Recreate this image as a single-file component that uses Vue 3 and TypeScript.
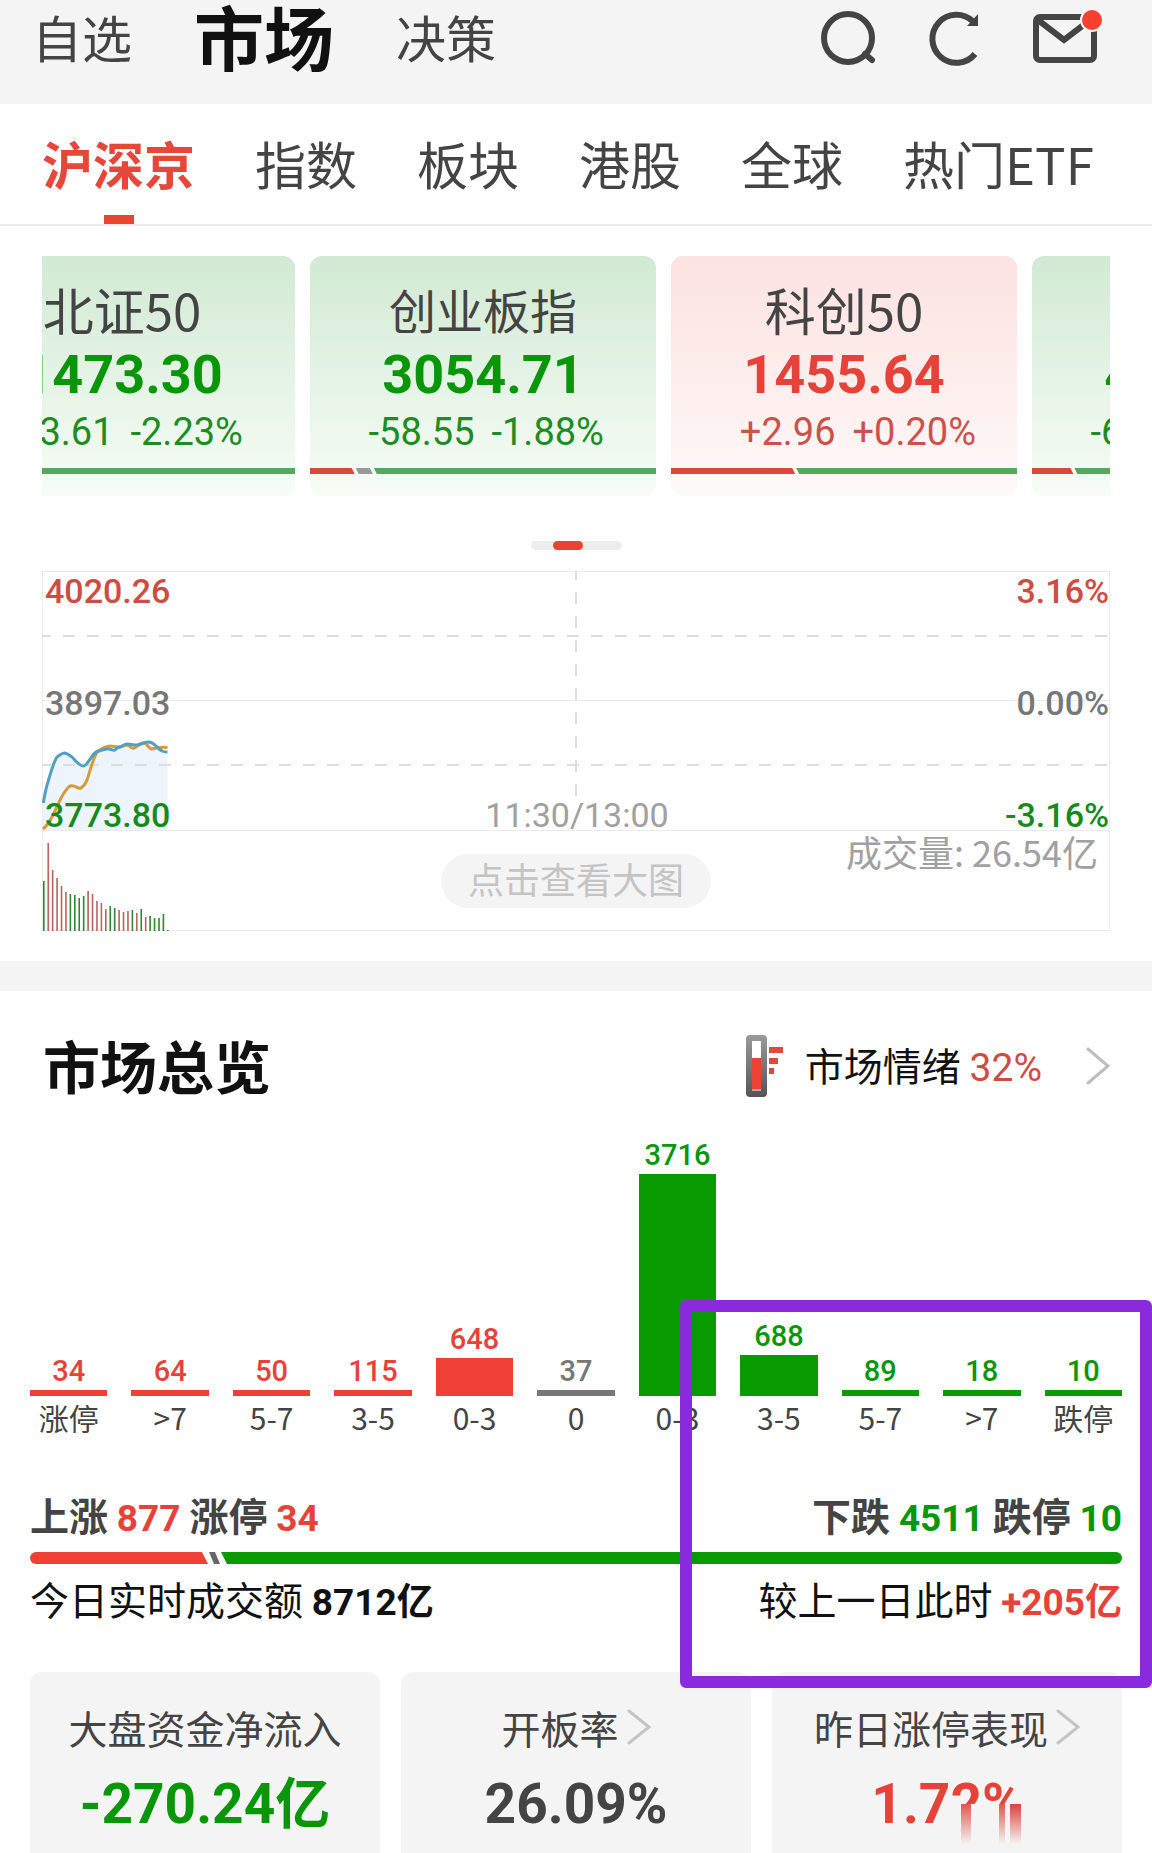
<script setup lang="ts">
type Tone = 'up' | 'down' | 'flat'

interface Segment { tone: Tone; share: number }
interface IndexCard {
  name: string
  long?: boolean
  price: string
  change: string
  percent: string
  tone: Tone
  segments: Segment[]
}
interface Bucket { count: number; label: string; tone: Tone; height: number }

const sections = ['自选', '市场', '决策']
const tabs = ['沪深京', '指数', '板块', '港股', '全球', '热门ETF']

const cards: IndexCard[] = [
  { name: '北证50', price: '1473.30', change: '-33.61', percent: '-2.23%', tone: 'down',
    segments: [{ tone: 'up', share: 10 }, { tone: 'down', share: 90 }] },
  { name: '创业板指', long: true, price: '3054.71', change: '-58.55', percent: '-1.88%', tone: 'down',
    segments: [{ tone: 'up', share: 13 }, { tone: 'flat', share: 5 }, { tone: 'down', share: 82 }] },
  { name: '科创50', price: '1455.64', change: '+2.96', percent: '+0.20%', tone: 'up',
    segments: [{ tone: 'up', share: 36 }, { tone: 'down', share: 64 }] },
  { name: '沪深300', long: true, price: '4650.12', change: '-65.30', percent: '-1.38%', tone: 'down',
    segments: [{ tone: 'up', share: 12 }, { tone: 'down', share: 88 }] },
]

const scale = [
  { value: '4020.26', percent: '3.16%', tone: 'up' },
  { value: '3897.03', percent: '0.00%', tone: 'flat' },
  { value: '3773.80', percent: '-3.16%', tone: 'down' },
]

const volumeHeights = [50, 88, 61, 53, 45, 39, 37, 36, 33, 35, 40, 37, 30, 28, 22, 25, 23, 21, 19, 20, 21, 18, 22, 14, 15, 13, 13, 17, 1]
const volumeTones = 'grrrrrggggrrrrrggrrrgrgrggggg'
const volumes = volumeHeights.map((h, i) => ({
  x: 1 + i * 4.43,
  h,
  fill: volumeTones[i] === 'g' ? '#2f8536' : '#b8645f',
}))

const buckets: Bucket[] = [
  { count: 34, label: '涨停', tone: 'up', height: 6 },
  { count: 64, label: '>7', tone: 'up', height: 6 },
  { count: 50, label: '5-7', tone: 'up', height: 6 },
  { count: 115, label: '3-5', tone: 'up', height: 6 },
  { count: 648, label: '0-3', tone: 'up', height: 38 },
  { count: 37, label: '0', tone: 'flat', height: 6 },
  { count: 3716, label: '0-3', tone: 'down', height: 222 },
  { count: 688, label: '3-5', tone: 'down', height: 41 },
  { count: 89, label: '5-7', tone: 'down', height: 6 },
  { count: 18, label: '>7', tone: 'down', height: 6 },
  { count: 10, label: '跌停', tone: 'down', height: 6 },
]
</script>

<template>
  <div class="page">
    <header class="top">
      <nav class="sections">
        <a v-for="s in sections" :key="s" href="#" :class="{ current: s === '市场' }">{{ s }}</a>
      </nav>
      <div class="tools">
        <button type="button" aria-label="搜索">
          <svg width="60" height="76" viewBox="0 0 60 76" fill="none" stroke="#444" stroke-width="6" stroke-linecap="round">
            <circle cx="30" cy="38" r="24" />
            <path d="M47 54 L54 60" />
          </svg>
        </button>
        <button type="button" aria-label="刷新">
          <svg width="60" height="76" viewBox="0 0 60 76" fill="none" stroke="#444" stroke-width="6">
            <path d="M49 21.500 A24 24 0 1 0 51 54" />
            <path d="M54 14 V26 H43 Z" fill="#444" stroke="none" />
          </svg>
        </button>
        <button type="button" aria-label="消息">
          <svg width="76" height="76" viewBox="0 0 76 76" fill="none" stroke="#444" stroke-width="6">
            <rect x="6" y="17" width="58" height="43" rx="4" />
            <path d="M8 20 L34 40 L60 20" />
            <circle cx="62" cy="20" r="12" fill="#f4f4f4" stroke="none" />
            <circle cx="62" cy="20" r="10" fill="#f83f31" stroke="none" />
          </svg>
        </button>
      </div>
    </header>

    <nav class="tabs">
      <a v-for="t in tabs" :key="t" href="#" :class="{ current: t === '沪深京' }">{{ t }}</a>
    </nav>

    <section class="carousel">
      <div class="track">
        <article v-for="c in cards" :key="c.name" class="index-card" :class="c.tone">
          <h2 :class="{ long: c.long }">{{ c.name }}</h2>
          <p class="price">{{ c.price }}</p>
          <p class="change"><span>{{ c.change }}</span><span>{{ c.percent }}</span></p>
          <div class="ratio">
            <i v-for="(s, i) in c.segments" :key="i" :class="s.tone" :style="{ width: s.share + '%' }"></i>
          </div>
        </article>
      </div>
    </section>
    <div class="pager"><i></i></div>

    <section class="chart">
      <svg class="plot" viewBox="0 0 1068 360" preserveAspectRatio="none" fill="none">
        <path d="M1.300 232 L5.800 211 L15 186 L23 182 L30 186 L37 193 L42 195 L46 192 L54 181 L65 178 L73 180 L77 176 L85 173 L95 174 L106 171 L112 173 L120 180 L125.500 181 V259 H1 Z" fill="#edf4fc" />
        <path d="M.5 .5 H1067.500 V359.500 H.5 Z M0 129.500 H1068 M0 259.500 H1068" stroke="#ebebeb" />
        <path d="M0 65 H1068 M0 194 H1068" stroke="#dedede" stroke-width="2" stroke-dasharray="12 12" stroke-dashoffset="3" />
        <path d="M534 0 V226" stroke="#dedede" stroke-width="2" stroke-dasharray="12 12" stroke-dashoffset="3" />
        <path d="M1 258 C6 254 8 250 11 244 C15 236 18 228 22 222 C26 216 28 214 31 215 C34 215 36 218 39 217 C42 215 43 214 45 209 C48 201 50 190 55 181 C59 178 64 175 68 175 C71 175 73 176 76 176 C80 176 82 174 86 174 C88 175 89 178 92 177 C96 175 99 172 103 172 C105 173 107 178 110 178 C113 177 118 176 125.500 176.500" stroke="#d69a3c" stroke-width="3" />
        <path d="M1.300 232 C3 222 4 217 6 211 C9 201 11 192 15 186 C18 184 20 182 23 182 C26 183 27 184 30 186 C32 188 35 192 37 193 C39 195 40 195 42 195 C44 194 45 193 46 191 C49 187 51 183 54 181 C58 180 62 178 65 178 C68 177 70 180 73 179 C75 178 75 176 78 176 C81 175 82 173 85 173 C88 173 91 174 95 174 C99 173 102 171 106 171 C109 171 111 172 113 174 C115 176 117 179 120 180 C122 181 124 181 125.500 181" stroke="#4f9fc9" stroke-width="3" />
        <rect v-for="v in volumes" :key="v.x" :x="v.x" :y="360 - v.h" width="1.600" :height="v.h" :fill="v.fill" />
      </svg>
      <div class="prices">
        <div v-for="s in scale" :key="s.value" class="price-row">
          <span :class="s.tone">{{ s.value }}</span>
          <time v-if="s.tone === 'down'">11:30/13:00</time>
          <span class="right" :class="s.tone">{{ s.percent }}</span>
        </div>
      </div>
      <div class="volume">
        <button type="button">点击查看大图</button>
        <p>成交量: 26.54亿</p>
      </div>
    </section>

    <section class="overview">
      <header class="overview-head">
        <h1>市场总览</h1>
        <a href="#" class="mood">
          <svg width="38" height="62" viewBox="0 0 38 62">
            <defs>
              <linearGradient id="tube" x1="0" y1="0" x2="0" y2="1">
                <stop offset="0" stop-color="#9a9a9a" />
                <stop offset="1" stop-color="#555" />
              </linearGradient>
            </defs>
            <rect width="21" height="62" rx="4" fill="url(#tube)" />
            <rect x="6" y="6" width="9" height="50" fill="#fff" />
            <rect x="6" y="23" width="9" height="31" fill="#ee4034" />
            <rect x="6" y="54" width="9" height="2" fill="#aaa" />
            <path d="M23 12 h14 v6 h-14 z M23 23 h9 v6 h-9 z M23 33 h5 v6 h-5 z" fill="#e0483c" />
          </svg>
          <span class="mood-text">市场情绪 <b>32%</b></span>
          <svg width="24" height="38" viewBox="0 0 24 38" fill="none" stroke="#bdbdbd" stroke-width="3" stroke-linecap="round">
            <path d="M2 2 L22 19 L2 36" />
          </svg>
        </a>
      </header>

      <div class="bars">
        <div v-for="(b, i) in buckets" :key="i" class="bucket" :class="b.tone">
          <span class="count">{{ b.count }}</span>
          <i :style="{ height: b.height + 'px' }"></i>
          <span class="label">{{ b.label }}</span>
        </div>
      </div>

      <div class="line strong">
        <p>上涨 <b class="up">877</b> 涨停 <b class="up">34</b></p>
        <p>下跌 <b class="down">4511</b> 跌停 <b class="down">10</b></p>
      </div>
      <div class="breadth"><i class="rise"></i><i class="even"></i><i class="fall"></i></div>
      <div class="line">
        <p>今日实时成交额 <b>8712亿</b></p>
        <p>较上一日此时 <b class="up">+205亿</b></p>
      </div>

      <div class="stats">
        <article>
          <h3>大盘资金净流入</h3>
          <p class="down">-270.24亿</p>
        </article>
        <article>
          <h3>开板率
            <svg width="24" height="38" viewBox="0 0 24 38" fill="none" stroke="#c4c4c4" stroke-width="3" stroke-linecap="round"><path d="M2 3 L22 19 L2 35" /></svg>
          </h3>
          <p>26.09%</p>
        </article>
        <article>
          <h3>昨日涨停表现
            <svg width="24" height="38" viewBox="0 0 24 38" fill="none" stroke="#c4c4c4" stroke-width="3" stroke-linecap="round"><path d="M2 3 L22 19 L2 35" /></svg>
          </h3>
          <p class="up"><span class="smeared">1.72%<i></i></span></p>
        </article>
      </div>

      <div class="marker"></div>
    </section>
  </div>
</template>

<style>
body {
  background: #fff;
}
</style>

<style scoped>
.page {
  overflow: hidden;
  background: #fff;
  color: #444;
  font-family: "Noto Sans CJK SC", sans-serif;
}
h1, h2, h3, p {
  margin: 0;
  font-weight: 400;
}
a {
  color: inherit;
  text-decoration: none;
}
button {
  border: 0;
  padding: 0;
  background: none;
  font: inherit;
}
svg {
  display: block;
}
i {
  display: block;
}
.top {
  display: flex;
  justify-content: space-between;
  padding: 0 46px 28px 32px;
  background: #f4f4f4;
}
.sections {
  display: flex;
  gap: 62px;
  font-size: 50px;
  line-height: 72px;
}
.sections .current {
  color: #111;
  font-size: 70px;
  font-weight: 700;
}
.tools {
  display: flex;
  gap: 46px;
  height: 76px;
}
.tabs {
  display: flex;
  gap: 60px;
  padding: 0 42px;
  border-bottom: 2px solid #ececec;
  font-size: 51px;
  line-height: 118px;
  height: 120px;
  white-space: nowrap;
}
.tabs .current {
  position: relative;
  color: #e5473a;
  font-weight: 700;
}
.tabs .current::after {
  content: "";
  position: absolute;
  left: 50%;
  bottom: 0;
  width: 30px;
  height: 9px;
  margin-left: -15px;
  background: #e8452f;
}
.carousel {
  margin: 30px 42px 0;
  overflow: hidden;
}
.track {
  display: flex;
  gap: 15px;
  margin-left: -93px;
}
.index-card {
  flex: none;
  box-sizing: border-box;
  width: 346px;
  padding: 22px 0;
  border-radius: 12px;
  text-align: center;
}
.index-card.down {
  background: linear-gradient(#d1ead3, #f7fcf7);
}
.index-card.up {
  background: linear-gradient(#fce2e0, #fef9f9);
}
.index-card h2 {
  color: #444;
  font-size: 51px;
  line-height: 62px;
}
.index-card h2.long {
  font-size: 47px;
}
.price {
  margin-top: 3px;
  font-family: Roboto, sans-serif;
  font-size: 54px;
  font-weight: 700;
  line-height: 64px;
}
.change {
  display: grid;
  grid-template-columns: 1fr 1fr;
  gap: 17px;
  font-family: Roboto, sans-serif;
  font-size: 38px;
  line-height: 50px;
}
.change span:first-child {
  text-align: right;
}
.change span:last-child {
  text-align: left;
}
.ratio {
  display: flex;
  gap: 1px;
  height: 6px;
  margin-top: 11px;
}
.ratio i {
  clip-path: polygon(0 0, calc(100% - 3px) 0, 100% 100%, 3px 100%);
}
.ratio i:last-child {
  clip-path: polygon(0 0, 100% 0, 100% 100%, 3px 100%);
}
.ratio i:first-child {
  clip-path: polygon(0 0, calc(100% - 3px) 0, 100% 100%, 0 100%);
}
.ratio .up {
  background: #d9483b;
}
.ratio .down {
  background: #54a95a;
}
.ratio .flat {
  background: #999;
}
.up {
  color: #e5433a;
}
.down {
  color: #099609;
}
.flat {
  color: #777;
}
.index-card.up .change {
  color: #cb524a;
}
.index-card.down .change {
  color: #1d8c22;
}
.pager {
  width: 91px;
  height: 9px;
  margin: 45px auto 0;
  border-radius: 5px;
  background: #ededed;
}
.pager i {
  width: 30px;
  height: 9px;
  margin-left: 22px;
  border-radius: 5px;
  background: #e8452f;
}
.chart {
  position: relative;
  margin: 21px 42px 30px;
  font-family: Roboto, sans-serif;
  font-size: 34px;
  font-weight: 500;
  line-height: 40px;
}
.plot {
  position: absolute;
  inset: 0;
  width: 100%;
  height: 100%;
}
.prices {
  position: relative;
  display: flex;
  flex-direction: column;
  gap: 72px;
  padding: 0 1px 0 3px;
}
.price-row {
  display: grid;
  grid-template-columns: 1fr auto 1fr;
}
.price-row .right {
  grid-column: 3;
  text-align: right;
}
.price-row .up {
  color: #cd4c43;
}
.price-row .down {
  color: #188a1d;
}
.price-row time {
  color: #a0a0a0;
  font-weight: 400;
}
.volume {
  position: relative;
  display: grid;
  grid-template-columns: 1fr auto 1fr;
  height: 96px;
  color: #a0a0a0;
  font-family: "Noto Sans CJK SC", sans-serif;
  font-size: 36px;
  font-weight: 400;
}
.volume button {
  grid-column: 2;
  height: 54px;
  margin-top: 19px;
  padding: 0 27px 6px;
  border-radius: 27px;
  background: #f4f4f4;
  color: #c4c4c4;
  line-height: 48px;
}
.volume p {
  padding-right: 12px;
  text-align: right;
  line-height: 32px;
}
.overview {
  position: relative;
  padding: 33px 30px 0;
  border-top: 30px solid #f4f4f4;
}
.overview-head {
  display: flex;
  justify-content: space-between;
  align-items: center;
  height: 84px;
  padding: 0 12px 0 13px;
}
.overview-head h1 {
  color: #111;
  font-size: 57px;
  font-weight: 700;
  line-height: 80px;
  padding-bottom: 4px;
}
.mood {
  display: flex;
  align-items: center;
  color: #111;
  font-size: 39px;
  line-height: 54px;
}
.mood-text {
  margin: 0 44px 0 21px;
}
.mood b {
  color: #cd4c43;
  font-family: Roboto, sans-serif;
  font-weight: 400;
}
.bars {
  display: flex;
  align-items: flex-end;
  gap: 24px;
  height: 332px;
}
.bucket {
  flex: 1;
  min-width: 0;
  text-align: center;
}
.bucket i {
  background: currentColor;
}
.bucket.up i {
  background: #ee4034;
}
.bucket.down i {
  background: #099a00;
}
.count {
  display: block;
  font-family: Roboto, sans-serif;
  font-size: 29px;
  font-weight: 500;
  line-height: 38px;
}
.label {
  display: block;
  color: #444;
  font-size: 30px;
  line-height: 42px;
  padding-bottom: 2px;
}
.line {
  display: flex;
  justify-content: space-between;
  margin-top: 7px;
  color: #111;
  font-size: 39px;
  line-height: 54px;
}
.line.strong {
  margin-top: 47px;
  color: #444;
}
.line.strong p {
  font-weight: 700;
}
.line b {
  font-family: Roboto, "Noto Sans CJK SC", sans-serif;
  font-size: 37px;
  font-weight: 700;
}
.breadth {
  display: flex;
  height: 12px;
  margin-top: 6px;
  border-radius: 6px;
  overflow: hidden;
}
.rise {
  width: 178px;
  background: #ee4034;
  clip-path: polygon(0 0, calc(100% - 6px) 0, 100% 100%, 0 100%);
}
.even {
  width: 11px;
  margin: 0 1px;
  background: #666;
  clip-path: polygon(0 0, 6px 0, 100% 100%, 5px 100%);
}
.fall {
  flex: 1;
  background: #099a00;
  clip-path: polygon(0 0, 100% 0, 100% 100%, 6px 100%);
}
.stats {
  display: grid;
  grid-template-columns: repeat(3, 1fr);
  gap: 21px;
  margin-top: 42px;
}
.stats article {
  padding: 28px 0 18px;
  border-radius: 12px 12px 0 0;
  background: #f4f4f4;
  text-align: center;
}
.stats h3 {
  display: flex;
  justify-content: center;
  align-items: center;
  gap: 8px;
  font-size: 39px;
  line-height: 54px;
}
.stats p {
  margin-top: 18px;
  font-family: Roboto, "Noto Sans CJK SC", sans-serif;
  font-size: 55px;
  font-weight: 700;
  line-height: 64px;
}
.smeared {
  position: relative;
  display: inline-block;
}
.smeared i {
  position: absolute;
  right: 0;
  bottom: -8px;
  width: 76px;
  height: 40px;
  background:
    linear-gradient(#dc5a50, #f4f4f4) 14px 0 / 10px 40px no-repeat,
    linear-gradient(#dc5a50, #f4f4f4) 52px 0 / 6px 40px no-repeat,
    linear-gradient(#d8443a, #f4f4f4) 63px 0 / 11px 40px no-repeat,
    #f4f4f4;
}
.marker {
  position: absolute;
  top: 309px;
  right: 0;
  box-sizing: border-box;
  width: 41%;
  height: 388px;
  border: 12px solid #8a2add;
  border-radius: 6px;
}
</style>
